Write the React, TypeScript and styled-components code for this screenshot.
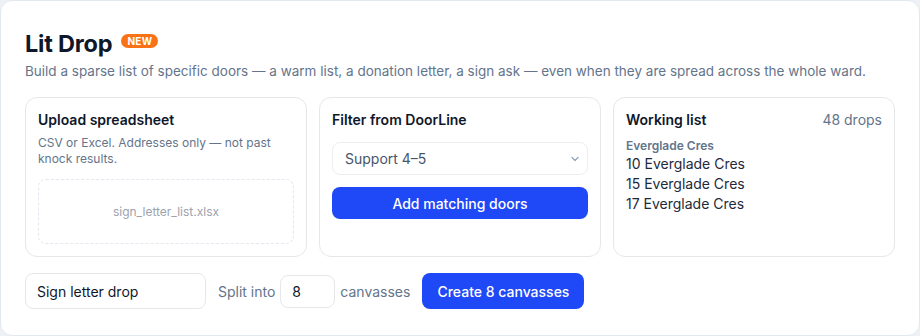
import React from "react";
import styled, { createGlobalStyle } from "styled-components";

const Global = createGlobalStyle`
  html, body { margin: 0; padding: 0; background: #eef1f6; }
  body { font-family: Inter, "Noto Sans", sans-serif; -webkit-font-smoothing: antialiased; }
  * { box-sizing: border-box; }
`;

const Card = styled.div`
  width: 920px;
  height: 336px;
  background: #ffffff;
  border: 1px solid #e2e8f0;
  border-radius: 12px;
  padding: 23px 24px 24px 24px;
`;

const TitleRow = styled.div`
  display: flex;
  align-items: center;
  gap: 9px;
  height: 32px;
  margin-top: 3px;
`;

const Title = styled.h1`
  margin: 0;
  font-size: 23.5px;
  font-weight: 700;
  color: #0f172a;
  letter-spacing: -0.2px;
`;

const Badge = styled.span`
  background: #f97316;
  color: #fff;
  font-size: 10px;
  font-weight: 700;
  line-height: 14px;
  padding: 0 6px;
  border-radius: 999px;
  letter-spacing: 0.3px;
  margin-top: -4px;
`;

const Desc = styled.p`
  margin: 2px 0 0;
  font-size: 13.5px;
  line-height: 20px;
  color: #64748b;
  white-space: nowrap;
`;

const Grid = styled.div`
  display: grid;
  grid-template-columns: repeat(3, 1fr);
  gap: 12px;
  margin-top: 16px;
`;

const Panel = styled.div`
  border: 1px solid #e5e7eb;
  border-radius: 12px;
  padding: 12px 12px 12px 12px;
  height: 160px;
  display: flex;
  flex-direction: column;
`;

const PanelHead = styled.div`
  display: flex;
  justify-content: space-between;
  align-items: center;
`;

const PanelTitle = styled.div`
  font-size: 14px;
  font-weight: 600;
  line-height: 20px;
  color: #0f172a;
`;

const Muted = styled.div`
  font-size: 14px;
  line-height: 20px;
  color: #64748b;
`;

const Help = styled.p`
  margin: 5px 0 0;
  font-size: 12px;
  line-height: 16px;
  color: #64748b;
`;

const Drop = styled.div`
  margin-top: 12px;
  height: 66px;
  border: 1px dashed #e2e8f0;
  border-radius: 8px;
  display: flex;
  align-items: center;
  justify-content: center;
  font-size: 12px;
  color: #9ca3af;
`;

const Select = styled.div`
  margin-top: 12px;
  height: 33px;
  border: 1px solid #eceef2;
  border-radius: 8px;
  display: flex;
  align-items: center;
  justify-content: space-between;
  padding: 0 6px 0 12px;
  font-size: 14px;
  color: #475569;
`;

const Button = styled.button<{ $full?: boolean }>`
  border: none;
  background: #1f48f6;
  color: #fff;
  font-family: inherit;
  font-size: 14px;
  font-weight: 500;
  border-radius: 8px;
  height: ${(p) => (p.$full ? "32px" : "36px")};
  width: ${(p) => (p.$full ? "100%" : "auto")};
  padding: 0 ${(p) => (p.$full ? "14px" : "15px")};
  margin-top: ${(p) => (p.$full ? "12px" : "0")};
`;

const Street = styled.div`
  margin-top: 8px;
  font-size: 12px;
  font-weight: 600;
  line-height: 16px;
  color: #64748b;
`;

const Item = styled.div`
  font-size: 14px;
  line-height: 20px;
  color: #1e293b;
`;

const Bottom = styled.div`
  display: flex;
  align-items: center;
  margin-top: 16px;
  gap: 12px;
`;

const TextInput = styled.div<{ $w: number; $h: number }>`
  width: ${(p) => p.$w}px;
  height: ${(p) => p.$h}px;
  border: 1px solid #e5e7eb;
  border-radius: 8px;
  display: flex;
  align-items: center;
  padding: 0 8px 0 11px;
  font-size: 14px;
  color: #0f172a;
`;

const SplitGroup = styled.div`
  display: flex;
  align-items: center;
  gap: 5px;
  font-size: 14px;
  color: #64748b;
`;

export default function App() {
  return (
    <>
      <Global />
      <Card>
        <TitleRow>
          <Title>Lit Drop</Title>
          <Badge>NEW</Badge>
        </TitleRow>
        <Desc>
          Build a sparse list of specific doors — a warm list, a donation letter, a sign ask — even when they are spread across the whole ward.
        </Desc>
        <Grid>
          <Panel>
            <PanelTitle>Upload spreadsheet</PanelTitle>
            <Help>CSV or Excel. Addresses only — not past knock results.</Help>
            <Drop>sign_letter_list.xlsx</Drop>
          </Panel>
          <Panel>
            <PanelTitle>Filter from DoorLine</PanelTitle>
            <Select>
              <span>Support 4–5</span>
              <svg width="12" height="12" viewBox="0 0 12 12" fill="none">
                <path d="M3 4.5 L6 7.5 L9 4.5" stroke="#94a3b8" strokeWidth="1.2" strokeLinecap="round" strokeLinejoin="round" />
              </svg>
            </Select>
            <Button $full>Add matching doors</Button>
          </Panel>
          <Panel>
            <PanelHead>
              <PanelTitle>Working list</PanelTitle>
              <Muted>48 drops</Muted>
            </PanelHead>
            <Street>Everglade Cres</Street>
            <Item>10 Everglade Cres</Item>
            <Item>15 Everglade Cres</Item>
            <Item>17 Everglade Cres</Item>
          </Panel>
        </Grid>
        <Bottom>
          <TextInput $w={181} $h={36}>Sign letter drop</TextInput>
          <SplitGroup>
            <span>Split into</span>
            <TextInput $w={55} $h={33}>8</TextInput>
            <span>canvasses</span>
          </SplitGroup>
          <Button>Create 8 canvasses</Button>
        </Bottom>
      </Card>
    </>
  );
}
